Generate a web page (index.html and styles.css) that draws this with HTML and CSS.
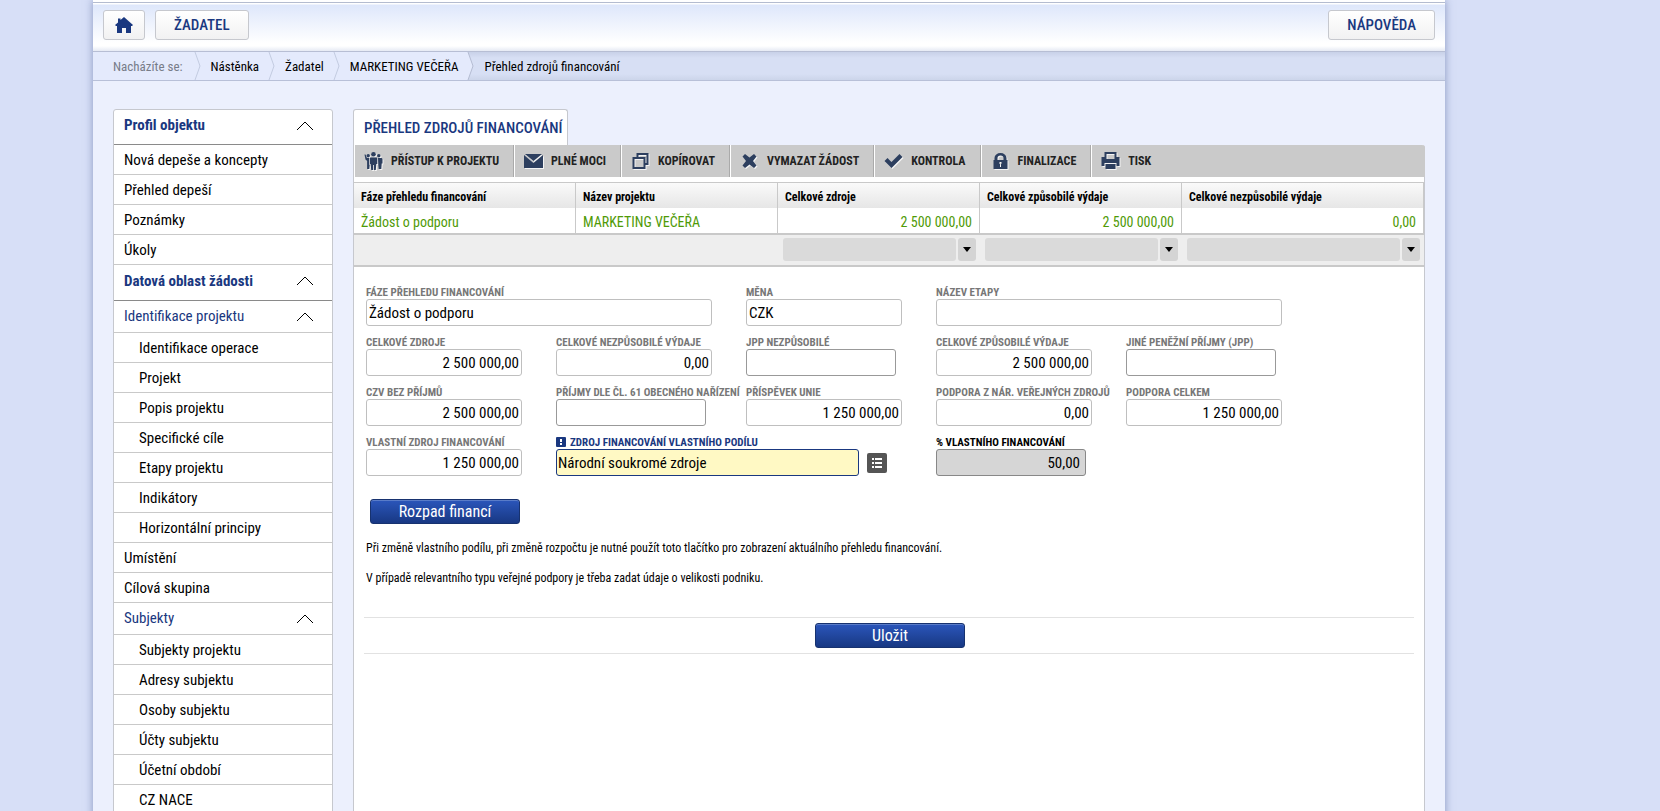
FILE: index.html
```html
<!DOCTYPE html>
<html lang="cs">
<head>
<meta charset="utf-8">
<title>Přehled zdrojů financování</title>
<link rel="stylesheet" href="styles.css">
</head>
<body>
<div class="page">
  <header class="topbar">
    <button class="top-btn home-btn" type="button" aria-label="Domů">
      <svg width="18" height="16" viewBox="0 0 18 16"><path d="M9 0 5.500 3V1.500H3V5.500L0 8l1 1h1v7h5v-5h4v5h5V9h1l1-1z" fill="#1a3880"/></svg>
    </button>
    <button class="top-btn" type="button">ŽADATEL</button>
    <button class="top-btn help-btn" type="button">NÁPOVĚDA</button>
  </header>
  <nav class="crumbs" aria-label="Drobečková navigace">
    <span class="crumb crumb-label">Nacházíte se:</span>
    <svg class="chev" width="8" height="28" viewBox="0 0 8 28"><path d="M1 0l5 14-5 14" /></svg>
    <a class="crumb" href="#">Nástěnka</a>
    <svg class="chev" width="8" height="28" viewBox="0 0 8 28"><path d="M1 0l5 14-5 14" /></svg>
    <a class="crumb" href="#">Žadatel</a>
    <svg class="chev" width="8" height="28" viewBox="0 0 8 28"><path d="M1 0l5 14-5 14" /></svg>
    <a class="crumb" href="#">MARKETING VEČEŘA</a>
    <svg class="chev chev-last" width="8" height="28" viewBox="0 0 8 28"><path class="fill" d="M0 0h1l5 14-5 14H0z"/><path d="M1 0l5 14-5 14"/></svg>
    <span class="crumb-current">Přehled zdrojů financování</span>
  </nav>
  <div class="body">
    <nav class="side" aria-label="Menu">
      <button class="side-head" type="button">Profil objektu<svg class="up" width="18" height="10" viewBox="0 0 18 10"><path d="M1 9l8-8 8 8"/></svg></button>
      <a class="side-item" href="#">Nová depeše a koncepty</a>
      <a class="side-item" href="#">Přehled depeší</a>
      <a class="side-item" href="#">Poznámky</a>
      <a class="side-item" href="#">Úkoly</a>
      <button class="side-head" type="button">Datová oblast žádosti<svg class="up" width="18" height="10" viewBox="0 0 18 10"><path d="M1 9l8-8 8 8"/></svg></button>
      <button class="side-group" type="button">Identifikace projektu<svg class="up" width="18" height="10" viewBox="0 0 18 10"><path d="M1 9l8-8 8 8"/></svg></button>
      <a class="side-item sub" href="#">Identifikace operace</a>
      <a class="side-item sub" href="#">Projekt</a>
      <a class="side-item sub" href="#">Popis projektu</a>
      <a class="side-item sub" href="#">Specifické cíle</a>
      <a class="side-item sub" href="#">Etapy projektu</a>
      <a class="side-item sub" href="#">Indikátory</a>
      <a class="side-item sub" href="#">Horizontální principy</a>
      <a class="side-item" href="#">Umístění</a>
      <a class="side-item" href="#">Cílová skupina</a>
      <button class="side-group" type="button">Subjekty<svg class="up" width="18" height="10" viewBox="0 0 18 10"><path d="M1 9l8-8 8 8"/></svg></button>
      <a class="side-item sub" href="#">Subjekty projektu</a>
      <a class="side-item sub" href="#">Adresy subjektu</a>
      <a class="side-item sub" href="#">Osoby subjektu</a>
      <a class="side-item sub" href="#">Účty subjektu</a>
      <a class="side-item sub" href="#">Účetní období</a>
      <a class="side-item sub" href="#">CZ NACE</a>
    </nav>
    <main class="main">
      <h1 class="tab">PŘEHLED ZDROJŮ FINANCOVÁNÍ</h1>
      <section class="panel">
        <div class="toolbar">
          <button class="tool" type="button">
            <svg width="19" height="18" viewBox="0 0 18 18"><circle cx="9" cy="2.300" r="2.300"/><circle cx="3.700" cy="3.800" r="1.700"/><circle cx="14.300" cy="3.800" r="1.700"/><path d="M5.800 5.500h6.400l.6 1v5.500h-1l-.5 6H9.400v-5h-.8v5H6.700l-.5-6h-1V6.500zM0 2.500h1L2.500 6h2v6.200l.7.600-.4 4.200H2.600V9L1 7.500zM13.500 6h3.700l.8 1v4.500h-.8l-.4 5.500h-2.600l-.4-4.200z"/></svg>PŘÍSTUP K PROJEKTU</button>
          <button class="tool" type="button">
            <svg width="19" height="14" viewBox="0 0 19 14"><path d="M1 0h17L9.500 7zM0 1l9.500 8L19 1v13H0z"/></svg>PLNÉ MOCI</button>
          <button class="tool" type="button">
            <svg width="19" height="18" viewBox="0 0 18 18"><path fill-rule="evenodd" d="M5 1h12v12h-3v4H1V5h4zM7 3v2h7v6h1V3zM3 7v8h9V7z"/></svg>KOPÍROVAT</button>
          <button class="tool" type="button">
            <svg width="19" height="16" viewBox="0 0 16 16"><path d="M3.500 1 8 4.500 12.500 1 15 3.500 11.500 8l3.500 4.500-2.500 2.500L8 11.500 3.500 15 1 12.500 4.500 8 1 3.500z"/></svg>VYMAZAT ŽÁDOST</button>
          <button class="tool" type="button">
            <svg width="19" height="14" viewBox="0 0 18 14"><path d="M0 7l3-3 4 4L15 0l3 3L7 14z"/></svg>KONTROLA</button>
          <button class="tool" type="button">
            <svg width="19" height="16" viewBox="0 0 14 16"><path fill-rule="evenodd" d="M1 7V5a6 5 0 0 1 12 0v2h1v9H0V7zM4 7h6V5a3 2.500 0 0 0-6 0zM6 9v2h.5v3h1v-3H8V9z"/></svg>FINALIZACE</button>
          <button class="tool" type="button">
            <svg width="19" height="18" viewBox="0 0 18 18"><path fill-rule="evenodd" d="M3 0h12v5h3v9h-3v-3H3v3H0V5h3zM5 2v5h8V2zM4 12h10v5H4z"/></svg>TISK</button>
        </div>
        <table class="grid">
          <colgroup><col class="c1"><col class="c2"><col class="c2"><col class="c2"><col></colgroup>
          <thead><tr><th>Fáze přehledu financování</th><th>Název projektu</th><th>Celkové zdroje</th><th>Celkové způsobilé výdaje</th><th>Celkové nezpůsobilé výdaje</th></tr></thead>
          <tbody>
            <tr class="data"><td>Žádost o podporu</td><td>MARKETING VEČEŘA</td><td class="num">2 500 000,00</td><td class="num">2 500 000,00</td><td class="num">0,00</td></tr>
            <tr class="filters"><td></td><td></td>
              <td><div class="filter"><input type="text" aria-label="Filtr: Celkové zdroje"><button type="button" aria-label="Možnosti filtru"><svg width="8" height="5" viewBox="0 0 8 5"><path d="M0 0h8L4 5z"/></svg></button></div></td>
              <td><div class="filter"><input type="text" aria-label="Filtr: Celkové způsobilé výdaje"><button type="button" aria-label="Možnosti filtru"><svg width="8" height="5" viewBox="0 0 8 5"><path d="M0 0h8L4 5z"/></svg></button></div></td>
              <td><div class="filter"><input type="text" aria-label="Filtr: Celkové nezpůsobilé výdaje"><button type="button" aria-label="Možnosti filtru"><svg width="8" height="5" viewBox="0 0 8 5"><path d="M0 0h8L4 5z"/></svg></button></div></td>
            </tr>
          </tbody>
        </table>
        <form class="form">
          <div class="fields">
            <div class="field wide"><label for="f1">FÁZE PŘEHLEDU FINANCOVÁNÍ</label><input id="f1" type="text" value="Žádost o podporu"></div>
            <div class="field"><label for="f2">MĚNA</label><input id="f2" type="text" value="CZK"></div>
            <div class="field wide"><label for="f3">NÁZEV ETAPY</label><input id="f3" type="text"></div>

            <div class="field amount"><label for="f4">CELKOVÉ ZDROJE</label><input id="f4" type="text" value="2 500 000,00"></div>
            <div class="field amount"><label for="f5">CELKOVÉ NEZPŮSOBILÉ VÝDAJE</label><input id="f5" type="text" value="0,00"></div>
            <div class="field short"><label for="f6">JPP NEZPŮSOBILÉ</label><input id="f6" type="text"></div>
            <div class="field amount"><label for="f7">CELKOVÉ ZPŮSOBILÉ VÝDAJE</label><input id="f7" type="text" value="2 500 000,00"></div>
            <div class="field short"><label for="f8">JINÉ PENĚŽNÍ PŘÍJMY (JPP)</label><input id="f8" type="text"></div>

            <div class="field amount"><label for="f9">CZV BEZ PŘÍJMŮ</label><input id="f9" type="text" value="2 500 000,00"></div>
            <div class="field short"><label for="f10">PŘÍJMY DLE ČL. 61 OBECNÉHO NAŘÍZENÍ</label><input id="f10" type="text"></div>
            <div class="field amount"><label for="f11">PŘÍSPĚVEK UNIE</label><input id="f11" type="text" value="1 250 000,00"></div>
            <div class="field amount"><label for="f12">PODPORA Z NÁR. VEŘEJNÝCH ZDROJŮ</label><input id="f12" type="text" value="0,00"></div>
            <div class="field amount"><label for="f13">PODPORA CELKEM</label><input id="f13" type="text" value="1 250 000,00"></div>

            <div class="field amount"><label for="f14">VLASTNÍ ZDROJ FINANCOVÁNÍ</label><input id="f14" type="text" value="1 250 000,00"></div>
            <div class="field wide required"><label for="f15"><svg width="10" height="10" viewBox="0 0 10 10"><rect width="10" height="10" rx="1" fill="#1a3880"/><path d="M4 2h2v3H4zM4 6h2v2H4z" fill="#fff"/></svg>ZDROJ FINANCOVÁNÍ VLASTNÍHO PODÍLU</label>
              <div class="picker"><input id="f15" type="text" value="Národní soukromé zdroje"><button type="button" aria-label="Vybrat ze seznamu"><svg width="10" height="10" viewBox="0 0 10 10"><path d="M0 0h2v2H0zM3 0h7v2H3zM0 4h2v2H0zM3 4h7v2H3zM0 8h2v2H0zM3 8h7v2H3z" fill="#fff"/></svg></button></div></div>
            <div class="field short locked"><label for="f16">% VLASTNÍHO FINANCOVÁNÍ</label><input id="f16" type="text" value="50,00" readonly></div>
          </div>
          <button class="action breakdown" type="button">Rozpad financí</button>
          <p class="note">Při změně vlastního podílu, při změně rozpočtu je nutné použít toto tlačítko pro zobrazení aktuálního přehledu financování.</p>
          <p class="note">V případě relevantního typu veřejné podpory je třeba zadat údaje o velikosti podniku.</p>
          <div class="save"><button class="action" type="submit">Uložit</button></div>
        </form>
      </section>
    </main>
  </div>
</div>
</body>
</html>
```
FILE: styles.css
```css
* { box-sizing: border-box; }
html { background: #d7dff7; }
body {
  margin: 0;
  height: 100vh;
  overflow: hidden;
  font-family: "Roboto Condensed", "Liberation Sans Narrow", Roboto, sans-serif;
  font-size: 14px;
  color: #000;
}
button, input { font-family: inherit; color: inherit; margin: 0; }
a { color: inherit; text-decoration: none; }

.page {
  margin: 0 215px 0 93px;
  border-top: 2px solid #fff;
  background: #ecf0fd;
  box-shadow: 0 0 8px rgba(60, 80, 140, .5);
}

.topbar {
  display: flex;
  gap: 10px;
  padding: 7px 10px 11px;
  border-top: 1px solid #b4bcd0;
  border-bottom: 1px solid #b7bed4;
  background: linear-gradient(#fff 0, #fff 1px, #dee7fb 2px, #fff 40px, #fff 43px, #e6eaf4 100%);
}
.top-btn {
  height: 30px;
  padding: 0 18px;
  border: 1px solid #c6c8ce;
  border-radius: 3px;
  background: linear-gradient(#fff, #f1f1f2);
  color: #1a3880;
  font-size: 15px;
  font-weight: 500;
  line-height: 28px;
}
.home-btn { padding: 0 11px; }
.home-btn svg { display: block; }
.help-btn { margin-left: auto; }

.crumbs {
  display: flex;
  height: 29px;
  line-height: 30px;
  font-size: 13px;
  border-bottom: 1px solid #b8c0d8;
  background: linear-gradient(#c8d1e8, #d7dff4 6px, #d7dff4 22px, #ccd5ea);
}
.crumb { height: 28px; padding: 0 9px; background: #e4eafc; }
.crumb-label { padding-left: 20px; padding-right: 11px; color: #777c88; }
.crumb-current { padding-left: 9px; }
.chev { background: #e4eafc; fill: none; stroke: #c3cbe0; }
.chev-last { background: none; stroke: #b4bcd2; }
.chev .fill { fill: #e4eafc; stroke: none; }

.body { display: flex; align-items: flex-start; gap: 20px; padding: 28px 20px 0; }

.side {
  flex: 0 0 220px;
  display: flex;
  flex-direction: column;
  border: 1px solid #c6c8ce;
  border-radius: 3px 3px 0 0;
  background: #fff;
}
.side-head, .side-group, .side-item {
  display: flex;
  justify-content: space-between;
  padding: 0 18px 0 10px;
  border: 0;
  border-bottom: 1px solid #c9c9c9;
  background: none;
  font-size: 15px;
  line-height: 30px;
  height: 30px;
  text-align: left;
}
.side-head { height: 36px; color: #1a3880; font-weight: bold; border-color: #8a8a8a; line-height: 32px; }
.side-head:first-child { height: 35px; line-height: 30px; }
.side-group { height: 32px; color: #1a3880; }
.side-item.sub { padding-left: 25px; }
.up { margin-top: 11px; fill: none; stroke: #000; }

.main { flex: 1; min-width: 0; }
.tab {
  width: fit-content;
  margin: 0;
  padding: 0 4px 0 10px;
  height: 36px;
  border: 1px solid #c6c8ce;
  border-bottom: 0;
  border-radius: 3px 3px 0 0;
  background: #fff;
  color: #1a3880;
  font-size: 15px;
  font-weight: 500;
  line-height: 36px;
}
.panel {
  min-height: 700px;
  border: 1px solid #c6c8ce;
  border-top: 0;
  border-top-right-radius: 3px;
  background: #fff;
}
.toolbar { display: flex; height: 32px; margin-right: -1px; background: #cacaca; border-top-right-radius: 3px; }
.tool {
  display: flex;
  align-items: center;
  gap: 8px;
  padding: 0 14px 0 9px;
  border: 0;
  border-left: 1px solid #fff;
  border-right: 1px solid #aaa;
  background: none;
  color: #222;
  font-size: 12px;
  font-weight: bold;
}
.tool:last-child { border-right: 0; }
.tool svg { fill: #2d3f5f; filter: drop-shadow(1px 1px 0 #f4f4f4); }

.grid { width: 100%; margin-top: 5px; table-layout: fixed; border-spacing: 0; border-top: 1px solid #c9c9c9; }
.c1 { width: 222px; }
.c2 { width: 202px; }
.grid th, .grid td { padding: 0 7px; border-right: 1px solid #c9c9c9; }
.grid th { height: 25px; padding-top: 2px; text-align: left; font-size: 12px; background: linear-gradient(#fafafa, #e6e6e6); }
.data td { height: 27px; padding-top: 2px; border-bottom: 2px solid #c9c9c9; color: #4f9a06; }
.grid .num { text-align: right; }
.grid .filters td { height: 32px; padding: 0 4px 2px 5px; border-right: 0; border-bottom: 2px solid #c9c9c9; background: #eee; }
.filter { display: flex; gap: 2px; }
.filter input { flex: 1; min-width: 0; height: 23px; padding: 0 4px; border: 0; border-radius: 3px; background: #dadada; }
.filter button { display: flex; align-items: center; justify-content: center; width: 18px; padding: 0; border: 0; border-radius: 3px; background: #d4d4d4; }

.form { padding: 16px 10px 0; }
.fields { display: grid; grid-template-columns: repeat(5, 190px); margin-left: 2px; }
.field { height: 50px; white-space: nowrap; }
.wide { grid-column: span 2; }
.field label { display: block; height: 16px; line-height: 20px; font-size: 11px; font-weight: bold; color: #777; }
.field input { display: block; width: 156px; height: 27px; padding: 0 2px; border: 1px solid #bfbfbf; border-radius: 3px; background: #fff; font-size: 15px; }
.field.wide input { width: 346px; }
.field.short input { width: 150px; border-color: #999; }
.amount input { text-align: right; }
.field.required label { color: #1a3880; }
.required label svg { margin-right: 4px; vertical-align: -1px; }
.picker { display: flex; align-items: center; gap: 8px; }
.field.wide .picker input { width: 303px; padding: 0 1px; border-color: #1a3880; background: #fff9c4; }
.picker button { display: flex; align-items: center; justify-content: center; width: 20px; height: 20px; padding: 0; border: 0; border-radius: 2px; background: #555; }
.field.locked label { color: #000; }
.field.locked input { padding-right: 5px; border-color: #888; background: #d6d6d6; text-align: right; }

.action {
  display: block;
  width: 150px;
  height: 25px;
  padding: 0;
  border: 1px solid #17326f;
  border-radius: 3px;
  background: linear-gradient(#2b56bb, #183883);
  box-shadow: inset 0 1px 0 #5a7cc8;
  color: #fff;
  font-size: 16px;
  line-height: 24px;
}
.breakdown { margin: 16px 0 14px 6px; }
.note { margin: 0 2px 10px; font-size: 12px; line-height: 20px; }
.save { margin-top: 29px; padding: 5px 0 5px 2px; border: solid #e2e2e2; border-width: 1px 0; }
.save .action { margin: 0 auto; }
```
